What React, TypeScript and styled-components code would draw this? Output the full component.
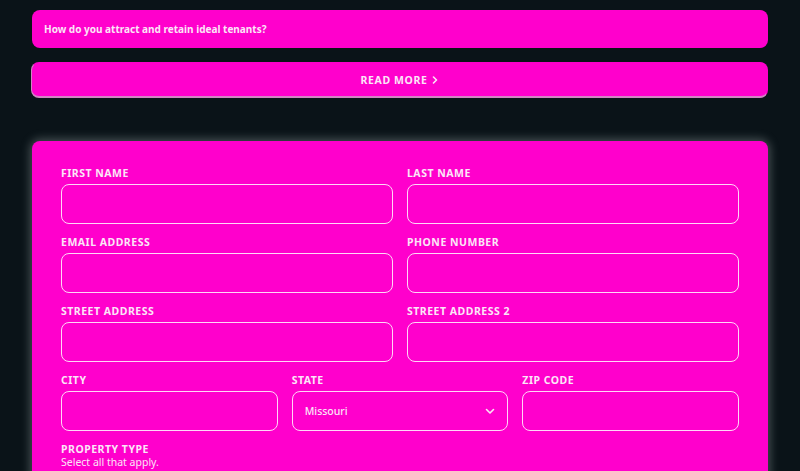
import React from "react";
import styled, { createGlobalStyle } from "styled-components";

const Global = createGlobalStyle`
  html, body { margin: 0; padding: 0; background: #0a1318; }
  body { font-family: "Noto Sans", "Open Sans", sans-serif; }
  * { box-sizing: border-box; }
`;

const Page = styled.div`
  padding: 10px 32px 0 32px;
  display: flex;
  flex-direction: column;
  height: 471px;
  overflow: hidden;
  & > * { flex-shrink: 0; }
`;

const Question = styled.div`
  background: #ff00cc;
  border-radius: 8px;
  height: 38px;
  display: flex;
  align-items: center;
  padding: 0 12px;
  color: #fbe6f7;
  font-weight: 700;
  font-size: 10px;
`;

const ReadMore = styled.button`
  margin-top: 14px;
  margin-left: -1px;
  height: 36px;
  background: #ff00cc;
  border: 1px solid rgba(190, 190, 190, 0.7);
  border-top-color: #ff00cc;
  border-right-color: #ff00cc;
  border-bottom-width: 2px;
  border-radius: 8px;
  color: #fbe6f7;
  font-family: "Noto Sans", sans-serif;
  font-weight: 700;
  font-size: 10.5px;
  letter-spacing: 0.6px;
  text-transform: uppercase;
  display: flex;
  align-items: center;
  justify-content: center;
  gap: 5px;
`;

const FormCard = styled.form`
  margin: 43px 0 0 0;
  background: #ff00cc;
  border-radius: 8px;
  box-shadow: 0 0 10px 2px rgba(190, 200, 200, 0.35);
  padding: 25px 29px 20px 29px;
  display: flex;
  flex-direction: column;
  gap: 11px;
`;

const Row = styled.div<{ $cols: number }>`
  display: grid;
  grid-template-columns: repeat(${(p) => p.$cols}, 1fr);
  column-gap: 14px;
`;

const Field = styled.label`
  display: flex;
  flex-direction: column;
  gap: 4px;
`;

const Label = styled.span`
  color: #fbe6f7;
  font-weight: 700;
  font-size: 10.5px;
  letter-spacing: 0.5px;
  text-transform: uppercase;
  line-height: 14px;
`;

const Input = styled.div`
  height: 40px;
  border: 1.6px solid rgba(255, 225, 250, 0.95);
  border-radius: 8px;
  display: flex;
  align-items: center;
  justify-content: space-between;
  padding: 0 12px;
  color: #fbe6f7;
  font-size: 10.5px;
  font-weight: 500;
`;

const Hint = styled.span`
  color: #fbe6f7;
  font-size: 10.5px;
  line-height: 13px;
`;

const Group = styled.div`
  display: flex;
  flex-direction: column;
`;

const Chevron = () => (
  <svg width="10" height="7" viewBox="0 0 10 7" fill="none">
    <path d="M1.5 1.5 L5 5 L8.5 1.5" stroke="#fbe6f7" strokeWidth="1.6" strokeLinecap="round" strokeLinejoin="round" />
  </svg>
);

const Arrow = () => (
  <svg width="6" height="8" viewBox="0 0 6 8" fill="none">
    <path d="M1.5 1 L4.5 4 L1.5 7" stroke="#fbe6f7" strokeWidth="1.6" strokeLinecap="round" strokeLinejoin="round" />
  </svg>
);

export default function App() {
  return (
    <>
      <Global />
      <Page>
        <Question>How do you attract and retain ideal tenants?</Question>
        <ReadMore type="button">
          Read more <Arrow />
        </ReadMore>
        <FormCard>
          <Row $cols={2}>
            <Field>
              <Label>First Name</Label>
              <Input />
            </Field>
            <Field>
              <Label>Last Name</Label>
              <Input />
            </Field>
          </Row>
          <Row $cols={2}>
            <Field>
              <Label>Email Address</Label>
              <Input />
            </Field>
            <Field>
              <Label>Phone Number</Label>
              <Input />
            </Field>
          </Row>
          <Row $cols={2}>
            <Field>
              <Label>Street Address</Label>
              <Input />
            </Field>
            <Field>
              <Label>Street Address 2</Label>
              <Input />
            </Field>
          </Row>
          <Row $cols={3}>
            <Field>
              <Label>City</Label>
              <Input />
            </Field>
            <Field>
              <Label>State</Label>
              <Input>
                Missouri <Chevron />
              </Input>
            </Field>
            <Field>
              <Label>Zip Code</Label>
              <Input />
            </Field>
          </Row>
          <Group>
            <Label>Property Type</Label>
            <Hint>Select all that apply.</Hint>
          </Group>
        </FormCard>
      </Page>
    </>
  );
}
